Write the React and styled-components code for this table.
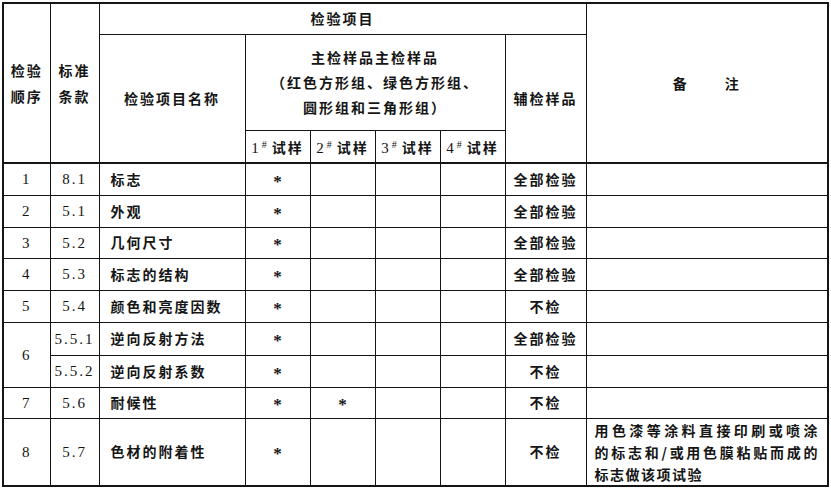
import styled, { createGlobalStyle } from "styled-components";

const INK = '#151515'

const GlobalStyle = createGlobalStyle`
  body {
    margin: 0;
    background: #fff;
  }
`

const Page = styled.div`
  padding: 2px 4px 0 2px;
`

const Table = styled.table`
  border-collapse: collapse;
  table-layout: fixed;
  width: 825px;
  border: 2px solid ${INK};
  font-family: "Noto Sans CJK SC", sans-serif;
  font-size: 14px;
  color: ${INK};
`

const Row = styled.tr`
  height: ${({ $h }) => $h}px;
`

const Cell = styled.td`
  border: 1px solid ${INK};
  border-bottom-width: ${({ $thick }) => ($thick ? 2 : 1)}px;
  padding: 0 0 0 ${({ $align }) => ($align === 'left' ? 11 : 0)}px;
  text-align: ${({ $align }) => $align || 'center'};
  vertical-align: middle;
  letter-spacing: 2px;
  font-weight: 700;
  line-height: ${({ $lh }) => $lh || 25}px;
`

const Num = styled.span`
  font-family: "Liberation Serif", serif;
  font-weight: 400;
  font-size: 15px;
  letter-spacing: 2px;
`

const Star = styled.span`
  font-family: "Liberation Serif", serif;
  font-weight: 700;
  font-size: 17px;
  letter-spacing: 0;
  vertical-align: -4px;
`

const Sup = styled.sup`
  font-family: "Liberation Serif", serif;
  font-size: 10px;
  font-weight: 400;
  letter-spacing: 0;
  margin: 0 5px 0 1px;
  vertical-align: 5px;
`

const Gap = styled.span`
  display: inline-block;
  width: ${({ $w }) => $w}px;
`

const RemarkCell = styled(Cell)`
  padding: 0 8px 0 8px;
  line-height: 22px;
  letter-spacing: 1.5px;
`

const RemarkLine = styled.div`
  text-align: ${({ $justify }) => ($justify ? 'justify' : 'left')};
  text-align-last: ${({ $justify }) => ($justify ? 'justify' : 'left')};
`

const COLS = [47, 49, 146, 65, 65, 65, 65, 81, 242]

const ROWS = [
  { seq: '1', clause: '8.1', name: '标志', marks: [1], aux: '全部检验', h: 32 },
  { seq: '2', clause: '5.1', name: '外观', marks: [1], aux: '全部检验', h: 32 },
  { seq: '3', clause: '5.2', name: '几何尺寸', marks: [1], aux: '全部检验', h: 31 },
  { seq: '4', clause: '5.3', name: '标志的结构', marks: [1], aux: '全部检验', h: 32 },
  { seq: '5', clause: '5.4', name: '颜色和亮度因数', marks: [1], aux: '不检', h: 32 },
  { seq: '6', span: 2, clause: '5.5.1', name: '逆向反射方法', marks: [1], aux: '全部检验', h: 33 },
  { clause: '5.5.2', name: '逆向反射系数', marks: [1], aux: '不检', h: 32 },
  { seq: '7', clause: '5.6', name: '耐候性', marks: [1, 2], aux: '不检', h: 31 },
  {
    seq: '8', clause: '5.7', name: '色材的附着性', marks: [1], aux: '不检', h: 65,
    remark: ['用色漆等涂料直接印刷或喷涂', '的标志和/或用色膜粘贴而成的', '标志做该项试验'],
  },
]

export default function App() {
  return (
    <Page>
      <GlobalStyle />
      <Table>
        <colgroup>
          {COLS.map((w, i) => <col key={i} style={{ width: w }} />)}
        </colgroup>
        <thead>
          <Row $h={31}>
            <Cell rowSpan={3} $lh={26} $thick>检验<br />顺序</Cell>
            <Cell rowSpan={3} $lh={26} $thick>标准<br />条款</Cell>
            <Cell colSpan={6}>检验项目</Cell>
            <Cell rowSpan={3} $thick>备<Gap $w={36} />注</Cell>
          </Row>
          <Row $h={96}>
            <Cell rowSpan={2} $thick>检验项目名称</Cell>
            <Cell colSpan={4}>
              主检样品主检样品<br />
              （红色方形组、绿色方形组、<br />
              圆形组和三角形组）
            </Cell>
            <Cell rowSpan={2} $thick>辅检样品</Cell>
          </Row>
          <Row $h={33}>
            {[1, 2, 3, 4].map((n) => (
              <Cell key={n} $thick><Num>{n}</Num><Sup>#</Sup>试样</Cell>
            ))}
          </Row>
        </thead>
        <tbody>
          {ROWS.map((r, i) => (
            <Row key={i} $h={r.h}>
              {r.seq && <Cell rowSpan={r.span || 1}><Num>{r.seq}</Num></Cell>}
              <Cell><Num>{r.clause}</Num></Cell>
              <Cell $align="left">{r.name}</Cell>
              {[1, 2, 3, 4].map((n) => (
                <Cell key={n}>{r.marks.includes(n) && <Star>*</Star>}</Cell>
              ))}
              <Cell>{r.aux}</Cell>
              {r.remark ? (
                <RemarkCell $align="left">
                  {r.remark.map((line, j) => (
                    <RemarkLine key={j} $justify={j < r.remark.length - 1}>{line}</RemarkLine>
                  ))}
                </RemarkCell>
              ) : (
                <Cell />
              )}
            </Row>
          ))}
        </tbody>
      </Table>
    </Page>
  );
}
